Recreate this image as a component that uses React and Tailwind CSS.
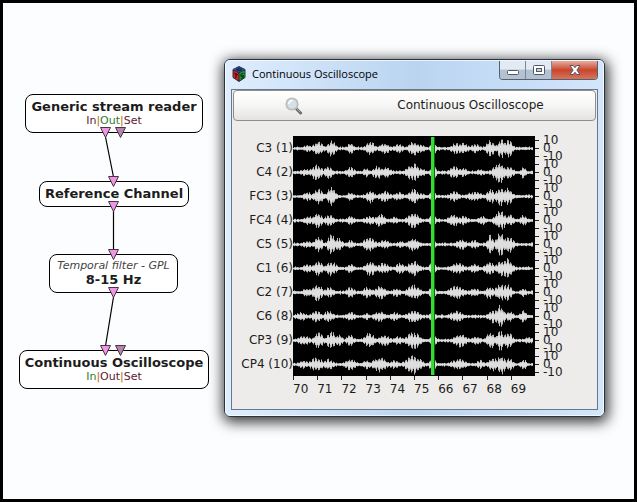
import React from "react";

const CHANNELS = [
  { name: "C3 (1)", bursts: [[307, 6, 3], [318, 6, 7], [331, 5, 8], [350, 4, 5], [370, 6, 6], [384, 7, 5], [398, 6, 4], [413, 6, 7], [419, 7, 4], [433, 4, 5], [456, 7, 5], [463, 6, 5], [475, 6, 4], [490, 5, 8], [501, 5, 9], [508, 5, 8]] },
  { name: "C4 (2)", bursts: [[305, 7, 3], [316, 7, 7], [328, 5, 6], [350, 5, 5], [366, 4, 4], [377, 6, 6], [386, 6, 5], [413, 8, 8], [421, 5, 4], [433, 4, 6], [454, 6, 6], [463, 6, 4], [480, 6, 3], [499, 7, 10], [508, 6, 6], [523, 3, 6]] },
  { name: "FC3 (3)", bursts: [[307, 6, 4], [318, 6, 7], [331, 5, 9], [350, 4, 4], [370, 5, 6], [384, 7, 5], [398, 6, 4], [413, 6, 7], [420, 6, 3], [432, 4, 5], [454, 6, 5], [474, 10, 4], [490, 5, 7], [500, 5, 9], [507, 6, 8]] },
  { name: "FC4 (4)", bursts: [[308, 6, 4], [317, 6, 7], [329, 6, 5], [350, 5, 4], [370, 8, 4], [380, 6, 6], [394, 6, 3], [413, 7, 7], [432, 4, 6], [453, 6, 6], [463, 6, 4], [482, 5, 4], [500, 7, 9], [510, 4, 6], [523, 4, 5]] },
  { name: "C5 (5)", bursts: [[307, 6, 3], [318, 5, 7], [331, 5, 9], [338, 5, 6], [350, 5, 4], [369, 7, 7], [384, 7, 4], [400, 5, 3], [413, 7, 6], [433, 3, 4], [461, 6, 5], [474, 5, 4], [490, 4, 9], [500, 5, 12], [508, 6, 8]] },
  { name: "C1 (6)", bursts: [[307, 6, 4], [318, 6, 7], [331, 6, 7], [350, 5, 4], [370, 6, 7], [383, 8, 5], [400, 6, 5], [413, 7, 7], [432, 4, 6], [457, 9, 5], [474, 6, 4], [489, 6, 6], [500, 5, 7], [507, 6, 9]] },
  { name: "C2 (7)", bursts: [[307, 6, 4], [317, 6, 8], [329, 6, 5], [350, 5, 5], [367, 6, 5], [380, 7, 6], [396, 6, 4], [413, 8, 7], [432, 4, 6], [456, 9, 6], [474, 6, 4], [489, 5, 6], [500, 6, 8], [507, 5, 8], [523, 4, 4]] },
  { name: "C6 (8)", bursts: [[301, 6, 4], [316, 6, 5], [328, 6, 5], [350, 6, 4], [366, 4, 3], [379, 7, 5], [394, 6, 4], [413, 8, 6], [432, 4, 5], [456, 8, 5], [493, 6, 6], [500, 5, 11], [509, 5, 5], [523, 4, 6]] },
  { name: "CP3 (9)", bursts: [[304, 8, 4], [318, 6, 7], [331, 6, 8], [339, 4, 5], [350, 5, 5], [369, 6, 7], [384, 7, 5], [398, 6, 4], [413, 8, 8], [433, 4, 5], [460, 8, 6], [476, 6, 4], [490, 5, 8], [500, 5, 9], [508, 5, 8], [528, 6, 3]] },
  { name: "CP4 (10)", bursts: [[303, 6, 4], [316, 7, 7], [328, 6, 5], [350, 7, 5], [366, 5, 4], [379, 8, 7], [394, 6, 4], [413, 9, 9], [432, 4, 6], [458, 9, 5], [480, 5, 4], [493, 6, 6], [501, 5, 9], [509, 5, 6], [523, 4, 5]] },
];

const SECONDS = [70, 71, 72, 73, 74, 75, 66, 67, 68, 69];

function noise(n) {
  const v = Math.sin(n * 127.1) * 43758.5453;
  return v - Math.floor(v);
}

function tracePath(bursts, row, scale) {
  const mid = row * 24 + 12.5;
  let d = "";
  for (let x = 0; x < 240; x += 1) {
    let amp = 0.6 + 1.4 * noise(x * 5 + row * 53);
    for (const [center, width, height] of bursts) {
      const t = (x + 293 - center) / width;
      amp = Math.max(amp, height * 1.1 * Math.exp(-t * t));
    }
    const up = amp * (0.6 + 0.4 * noise(x + row * 311));
    const down = amp * (0.6 + 0.4 * noise(x * 3 + row * 97 + 7));
    const beat = (x % 3 === 0 ? 0.6 : 1) * scale;
    d += `M${x + 0.5} ${(mid - up * beat - 0.4).toFixed(1)}V${(mid + down * beat + 0.4).toFixed(1)}`;
  }
  return d;
}

function Port({ x, y, muted }) {
  return (
    <path
      d={`M${x - 5} ${y}H${x + 5}L${x} ${y + 10}Z`}
      fill={muted ? "#b585b0" : "#ee96e2"}
      stroke="#4a3548"
      strokeWidth="1"
    />
  );
}

function Node({ className, children }) {
  return (
    <div className={`absolute flex flex-col items-center rounded-lg border border-black bg-white whitespace-nowrap ${className}`}>
      {children}
    </div>
  );
}

function NodeTitle({ children }) {
  return <h2 className="text-[13px] leading-4 font-bold text-[#1c1c1c]">{children}</h2>;
}

function Flags({ active }) {
  const color = (name) => (active === name ? "text-[#2f7d2f]" : "text-[#602030]");
  return (
    <p className="text-[11px] leading-3 text-[#b86a10]">
      <span className={color("In")}>In</span>|<span className={color("Out")}>Out</span>|
      <span className={color("Set")}>Set</span>
    </p>
  );
}

function Pipeline() {
  return (
    <section aria-label="Pipeline">
      <Node className="top-[91px] left-[22px] h-[39px] w-[178px] pt-1">
        <NodeTitle>Generic stream reader</NodeTitle>
        <Flags active="Out" />
      </Node>
      <Node className="top-[178px] left-[36px] h-[26px] w-[150px] pt-1">
        <NodeTitle>Reference Channel</NodeTitle>
      </Node>
      <Node className="top-[251px] left-[46px] h-[39px] w-[129px] pt-[3px]">
        <p className="text-[11px] leading-4 text-[#444] italic">Temporal filter - GPL</p>
        <h2 className="text-[13px] leading-3 font-bold text-[#1c1c1c]">8-15 Hz</h2>
      </Node>
      <Node className="top-[347px] left-[16px] h-[39px] w-[190px] pt-1">
        <NodeTitle>Continuous Oscilloscope</NodeTitle>
        <Flags active="In" />
      </Node>
      <svg className="absolute top-0 left-0" width="220" height="400" viewBox="3 3 220 400" aria-hidden="true">
        <g stroke="#000" strokeWidth="1.2">
          <path d="M105.5 137L113.5 177M113.5 211V250M113.5 297L105.5 346" />
        </g>
        <Port x={105.5} y={127.5} />
        <Port x={120.5} y={127.5} muted />
        <Port x={113.5} y={176.5} />
        <Port x={113.5} y={201.5} />
        <Port x={113.5} y={249.5} />
        <Port x={113.5} y={287.5} />
        <Port x={105.5} y={345.5} />
        <Port x={120.5} y={345.5} muted />
      </svg>
    </section>
  );
}

function AppIcon() {
  return (
    <svg width="14" height="16" viewBox="0 0 14 16" aria-hidden="true">
      <path d="M7 .5L13 3.5V11.5L7 15.5L1 11.5V3.5Z" fill="#222" stroke="#333" />
      <path d="M7 1L12.5 3.7L7 6.5L1.5 3.7Z" fill="#2456a8" />
      <path d="M1.5 4.5L6.5 7V14.5L1.5 11.2Z" fill="#d8232b" />
      <path d="M12.5 4.5L7.5 7V14.5L12.5 11.2Z" fill="#1da53a" />
      <path d="M4.5 3.7L7 2.6L9.5 3.7L7 5Z" fill="none" stroke="#0c1c3c" />
      <path d="M2.3 7L5.8 8.8M4 8V12" stroke="#4c0a10" strokeWidth="1.3" />
      <path d="M11.5 7L9 8.4V10.4L11.3 9.6V11.4L8.8 12.8" fill="none" stroke="#0a4014" strokeWidth="1.2" />
    </svg>
  );
}

function TitleBar() {
  return (
    <header className="flex h-7 items-start justify-between pl-1.5">
      <div className="flex items-center gap-1.5 pt-[5px]">
        <AppIcon />
        <h1 className="font-['Open_Sans','Noto_Sans',sans-serif] text-[11px] leading-4 text-black">Continuous Oscilloscope</h1>
      </div>
      <div className="mr-[5px] flex h-[19px] overflow-hidden rounded-b border border-t-0 border-[#56606e]">
        <button aria-label="Minimize" className="flex w-[26px] items-center justify-center border-r border-[#7a8696] bg-linear-to-b from-[#e3eaf3] from-45% to-[#b3c2d3] to-50%">
          <svg width="12" height="12" viewBox="0 0 12 12"><rect x=".5" y="6.5" width="11" height="4" rx="1" fill="#fff" stroke="#535666" /></svg>
        </button>
        <button aria-label="Maximize" className="flex w-[26px] items-center justify-center border-r border-[#7a8696] bg-linear-to-b from-[#e3eaf3] from-45% to-[#b3c2d3] to-50%">
          <svg width="12" height="10" viewBox="0 0 12 10">
            <rect x=".5" y=".5" width="11" height="9" rx="1" fill="#fff" stroke="#535666" />
            <rect x="3.5" y="3.5" width="5" height="3" fill="#c6d0dc" stroke="#535666" />
          </svg>
        </button>
        <button aria-label="Close" className="flex w-[45px] items-center justify-center bg-linear-to-b from-[#e8aa9c] via-[#c7452c] via-50% to-[#d8745c]">
          <svg width="12" height="10" viewBox="0 0 12 10">
            <path d="M1 .5H4.2L6 2.7L7.8 .5H11L7.9 5L11 9.5H7.8L6 7.3L4.2 9.5H1L4.1 5Z" fill="#fff" stroke="#535666" />
          </svg>
        </button>
      </div>
    </header>
  );
}

function Magnifier() {
  return (
    <svg width="18" height="18" viewBox="0 0 18 18" aria-hidden="true">
      <path d="M11 11.5L15.6 16" stroke="#6b6c69" strokeWidth="3" strokeLinecap="round" />
      <path d="M12 12L15 15" stroke="#aaa" strokeWidth="1" strokeLinecap="round" />
      <circle cx="7" cy="7" r="5.7" fill="#d6e0e8" stroke="#bcbebb" strokeWidth="1.8" />
      <path d="M3.8 7A3.4 3.4 0 0 1 7.5 3.6" fill="none" stroke="#fff" strokeWidth="1.6" />
    </svg>
  );
}

function Plot() {
  return (
    <div className="grid grid-cols-[1fr_242px_62px] pt-[15px] text-xs text-[#1c1c1c]">
      <ul>
        {CHANNELS.map((channel) => (
          <li key={channel.name} className="h-6 text-right leading-6">{channel.name}</li>
        ))}
      </ul>
      <svg className="h-60 w-full bg-black" viewBox="0 0 242 240" role="img" aria-label="Channel signals">
        {CHANNELS.map((channel, row) => (
          <g key={channel.name} strokeWidth="1">
            <path d={tracePath(channel.bursts, row, 1)} stroke="#b8b8b8" />
            <path d={tracePath(channel.bursts, row, 0.6)} stroke="#dedede" />
          </g>
        ))}
        <path d="M139.5 1V239" stroke="#33dd33" strokeWidth="3" />
        <path d="M141.5 1V239" stroke="#0c640c" strokeWidth="1" />
      </svg>
      <ul>
        {CHANNELS.map((channel) => (
          <li key={channel.name} className="h-6 leading-2">
            {["10", "0", "-10"].map((level) => (
              <span key={level} className="flex h-2 items-center gap-1 whitespace-nowrap">
                <i className="h-px w-1 bg-[#222]" />
                {level}
              </span>
            ))}
          </li>
        ))}
      </ul>
      <ol className="col-start-2 grid grid-cols-10">
        {SECONDS.map((second) => (
          <li key={second}>
            <i className="block h-1 w-px bg-[#222]" />
            <span className="block pt-px leading-4">{second}</span>
          </li>
        ))}
      </ol>
    </div>
  );
}

export default function App() {
  return (
    <main className="relative min-h-screen w-full overflow-hidden border-3 border-black bg-[#fcfdff] font-['DejaVu_Sans',sans-serif]">
      <Pipeline />
      <section
        aria-label="Continuous Oscilloscope"
        className="absolute top-[56px] left-[221px] w-[381px] rounded-md border border-[#2a3440] bg-linear-to-r from-[#dfeefe] via-[#bad4f0] via-50% to-[#d3e6fc] shadow-[1px_3px_14px_2px_rgba(0,0,0,0.8)]"
      >
        <div className="rounded-[5px] border border-white/70 px-[5px] pb-[5px]">
          <div className="-mx-[5px]">
            <TitleBar />
          </div>
          <div className="border border-[#66788e] bg-[#edecea] pb-3">
            <div className="px-px">
              <button className="flex h-[31px] w-full items-center rounded-sm border border-[#8f8d8a] bg-linear-to-b from-white via-[#f6f6f5] to-[#e4e3e1] pr-2">
                <span className="flex w-[120px] justify-center"><Magnifier /></span>
                <span className="flex-1 pb-0.5 text-center text-xs text-[#1c1c1c]">Continuous Oscilloscope</span>
              </button>
            </div>
            <Plot />
          </div>
        </div>
      </section>
    </main>
  );
}
